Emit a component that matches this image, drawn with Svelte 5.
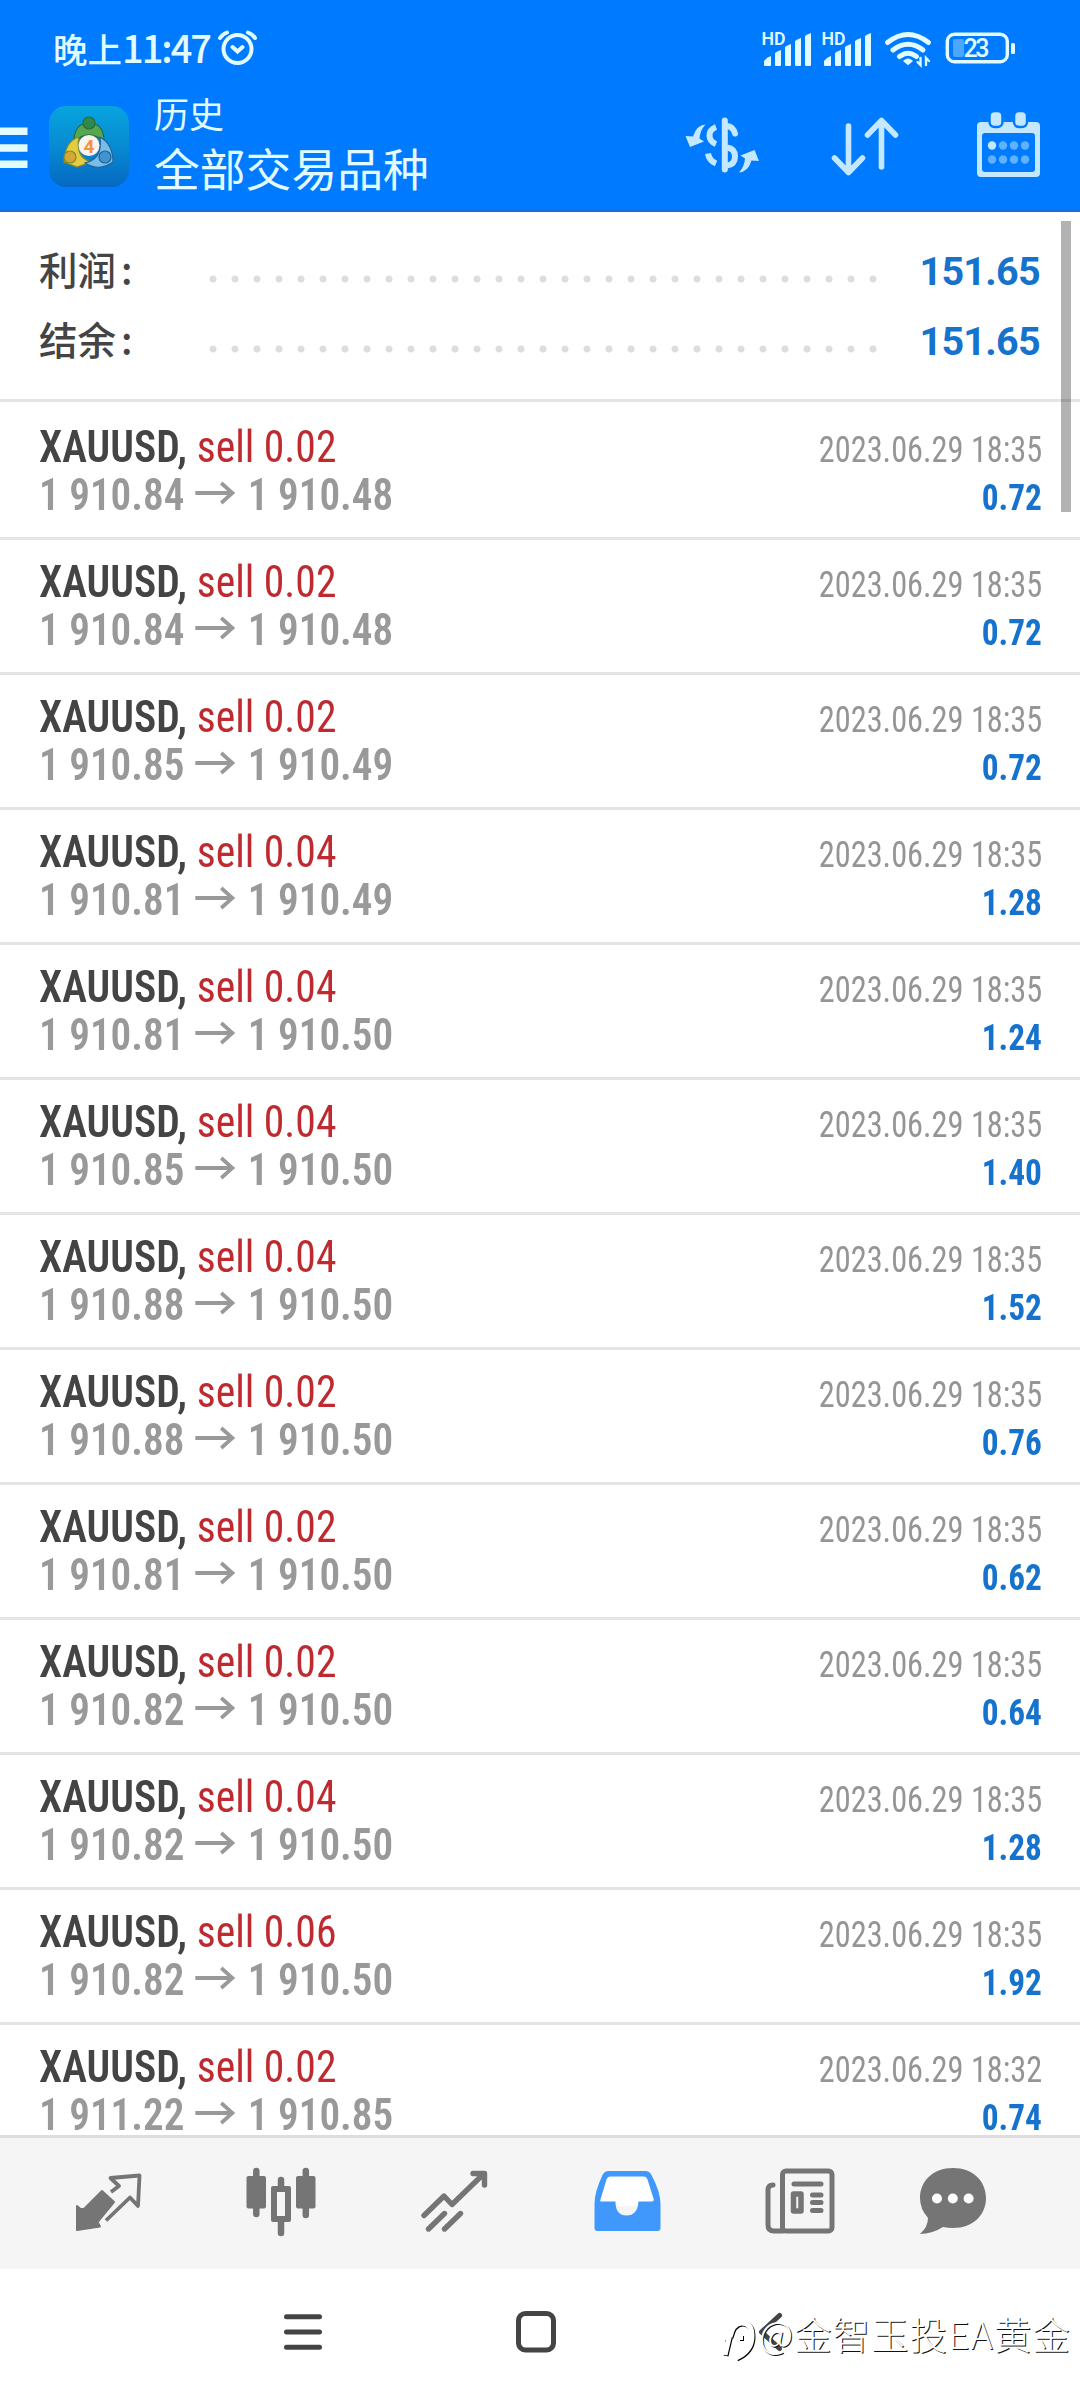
<script lang="ts">
	interface Deal {
		volume: string;
		open: string;
		close: string;
		time: string;
		profit: string;
	}

	const day = '2023.06.29';

	const deals: Deal[] = [
		{ volume: '0.02', open: '1 910.84', close: '1 910.48', time: '18:35', profit: '0.72' },
		{ volume: '0.02', open: '1 910.84', close: '1 910.48', time: '18:35', profit: '0.72' },
		{ volume: '0.02', open: '1 910.85', close: '1 910.49', time: '18:35', profit: '0.72' },
		{ volume: '0.04', open: '1 910.81', close: '1 910.49', time: '18:35', profit: '1.28' },
		{ volume: '0.04', open: '1 910.81', close: '1 910.50', time: '18:35', profit: '1.24' },
		{ volume: '0.04', open: '1 910.85', close: '1 910.50', time: '18:35', profit: '1.40' },
		{ volume: '0.04', open: '1 910.88', close: '1 910.50', time: '18:35', profit: '1.52' },
		{ volume: '0.02', open: '1 910.88', close: '1 910.50', time: '18:35', profit: '0.76' },
		{ volume: '0.02', open: '1 910.81', close: '1 910.50', time: '18:35', profit: '0.62' },
		{ volume: '0.02', open: '1 910.82', close: '1 910.50', time: '18:35', profit: '0.64' },
		{ volume: '0.04', open: '1 910.82', close: '1 910.50', time: '18:35', profit: '1.28' },
		{ volume: '0.06', open: '1 910.82', close: '1 910.50', time: '18:35', profit: '1.92' },
		{ volume: '0.02', open: '1 911.22', close: '1 910.85', time: '18:32', profit: '0.74' }
	];

	const totals = [
		{ label: '利润', value: '151.65' },
		{ label: '结余', value: '151.65' }
	];
</script>

{#snippet signal()}
	<svg class="signal" width="51" height="36" viewBox="0 0 51 36" fill="currentColor">
		<text x="-0.5" y="13.500" font-size="17.5" font-weight="600" textLength="24" lengthAdjust="spacingAndGlyphs">HD</text>
		<path d="M2 34v-4q3-4 7-5v9q0 1-1 1H3q-1 0-1-1z" />
		<path d="M13 34V22q3-2 6-3v15q0 1-1 1h-4q-1 0-1-1z" />
		<path d="M23 34V16q3-2 6-3v21q0 1-1 1h-4q-1 0-1-1z" />
		<path d="M33 34V10q3-2 6-3v27q0 1-1 1h-4q-1 0-1-1z" />
		<path d="M43 34V5q3-2 6-3v32q0 1-1 1h-4q-1 0-1-1z" />
	</svg>
{/snippet}

<div class="screen">
	<header>
		<div class="status">
			<span class="clock">晚上<b>11:47</b></span>
			<svg width="40" height="38" viewBox="218 31 40 38" fill="none" stroke="currentColor" stroke-width="4" stroke-linecap="round">
				<circle cx="237.500" cy="50" r="14" />
				<path d="M232.500 48l5 4.500 5-4.500M220 39q2-3.500 7-5.500M255 39q-2-3.500-7-5.500" />
			</svg>
			<div class="status-right">
				{@render signal()}
				{@render signal()}
				<svg class="wifi" width="48" height="38" viewBox="884 31 48 38" fill="none" stroke="currentColor" stroke-width="5" stroke-linecap="round">
					<path d="M887.500 43.500q20.500-16 41 0M893 51q15-11.500 30 0M899.500 57.500q8.500-6.500 17 0" />
					<path d="M904.500 62q3.500-3 7 0l-3.500 3z" fill="currentColor" stroke-width="2" />
					<path d="M920.500 59v7l-3-3M926 66v-7l3 3" stroke-width="2.400" />
				</svg>
				<svg width="70" height="34" viewBox="945 33 70 34">
					<rect x="947.300" y="35.300" width="60" height="27.400" rx="7" fill="none" stroke="currentColor" stroke-width="3.400" />
					<rect x="953" y="40" width="11" height="18" rx="2" fill="#4ca6ff" />
					<rect x="1011" y="44" width="4" height="11" rx="1.500" fill="currentColor" />
					<text x="963.500" y="58" font-size="25" font-weight="500" fill="currentColor" textLength="26">23</text>
				</svg>
			</div>
		</div>
		<div class="toolbar">
			<svg class="menu" width="48" height="41" viewBox="0 127 48 41" fill="currentColor">
				<path d="M0 127.500h27.500v7.500H0zM0 144.300h27.500v7.500H0zM0 160.500h27.500v7.500H0z" />
			</svg>
			<svg class="app-icon" width="82" height="84" viewBox="47 105 82 84">
				<defs>
					<linearGradient id="tile" x1="0" y1="0" x2="0" y2="1">
						<stop offset="0" stop-color="#08a4de" />
						<stop offset="0.500" stop-color="#078bd2" />
						<stop offset="1" stop-color="#0568c2" />
					</linearGradient>
				</defs>
				<rect x="48" y="106" width="80" height="81" rx="17" fill="url(#tile)" />
				<g stroke-width="1.200">
					<g fill="#55a850" stroke="#2c6b3a">
						<path d="M73 142q0-19 15-19t15 19q-15-14-30 0z" />
						<circle cx="88" cy="123" r="6" fill="#2f8a50" />
					</g>
					<g fill="#e5cb3f" stroke="#7d8c2e">
						<path d="M78 137q-14 4-15 25l13 5 14-5q-16-5-12-25z" />
						<circle cx="69" cy="157" r="6" fill="#d5a637" />
					</g>
					<g fill="#77bde8" stroke="#22639b">
						<path d="M99 137q13 7 13 25-14 10-28 1 18-4 15-26z" />
						<circle cx="104" cy="157" r="6" fill="#3f95cf" />
					</g>
				</g>
				<circle cx="88" cy="145.500" r="10.500" fill="#fbf3ec" />
				<text x="82.500" y="152.500" font-size="19" font-weight="700" fill="#ef9442">4</text>
			</svg>
			<div class="titles">
				<span class="section">历史</span>
				<span class="filter">全部交易品种</span>
			</div>
			<div class="actions">
				<svg width="74" height="60" viewBox="685 115 74 60" fill="none" stroke="currentColor" stroke-width="6">
					<path d="M724.800 119.500v49" stroke-linecap="round" />
					<path d="M727 125q6 .5 8 7.500" stroke-linecap="round" />
					<path d="M716 126q-6.500 2.500-6.500 8.500t6.500 8.500M708 152.500q1 7 8 10M727 146.500q8 1 8 9t-8 9" />
					<path d="M705.500 123.500q-9 .5-12.500 12l-7.500-.5 4.500 11 14-5.500-4.500-3q.5-8 6-14zM739 171.500q9-.5 12.500-12l7.500.5-4.500-11-14 5.500 4.500 3q-.5 8-6 14z" fill="currentColor" stroke="none" />
				</svg>
				<svg width="70" height="62" viewBox="830 114 70 62" fill="none" stroke="currentColor" stroke-width="5.600" stroke-linecap="round" stroke-linejoin="round">
					<path d="M848.500 125v46M834.500 157l14 14.500 14-14.500M881.500 166v-46M867.500 134l14-14.500 14 14.500" />
				</svg>
				<svg width="66" height="68" viewBox="976 112 66 68" fill="currentColor">
					<path fill-rule="evenodd" d="M981 122h55q4 0 4 4v47q0 4-4 4h-55q-4 0-4-4v-47q0-4 4-4zM985 133q-3 0-3 3v33q0 3 3 3h47q3 0 3-3v-33q0-3-3-3z" />
					<g stroke="#007aff" stroke-width="2.500">
						<rect x="989.500" y="111" width="13" height="16" rx="5" />
						<rect x="1014" y="111" width="13" height="16" rx="5" />
					</g>
					<circle cx="992" cy="145.500" r="4.200" />
					<g fill="#5fb2ff">
						<circle cx="1003" cy="145.500" r="4.200" />
						<circle cx="1014" cy="145.500" r="4.200" />
						<circle cx="1025" cy="145.500" r="4.200" />
						<circle cx="992" cy="159.500" r="4.200" />
						<circle cx="1003" cy="159.500" r="4.200" />
						<circle cx="1014" cy="159.500" r="4.200" />
						<circle cx="1025" cy="159.500" r="4.200" />
					</g>
				</svg>
			</div>
		</div>
	</header>

	<main>
		<section class="totals">
			{#each totals as total}
				<div class="total">
					<span class="label">{total.label}<i>:</i></span>
					<span class="dots"></span>
					<span class="value">{total.value}</span>
				</div>
			{/each}
		</section>
		<ul>
			{#each deals as deal}
				<li>
					<div class="line">
						<span class="symbol">XAUUSD, <em>sell {deal.volume}</em></span>
						<span class="time">{day} {deal.time}</span>
					</div>
					<div class="line">
						<span class="prices">
							{deal.open}
							<svg width="44" height="24" viewBox="0 0 44 24" fill="none" stroke="currentColor" stroke-width="4">
								<path d="M0 12h41M28 2l12 10-12 10" />
							</svg>
							{deal.close}
						</span>
						<span class="profit">{deal.profit}</span>
					</div>
				</li>
			{/each}
		</ul>
		<div class="scrollbar"></div>
	</main>

	<nav class="tabs">
		<svg width="70" height="74" viewBox="74 2164 70 74" fill="none" stroke="currentColor" stroke-width="3.800" stroke-linejoin="round">
			<path d="M102 2191l12 11-16.500 20 2.500 4.500-23 3.500v-24l3.500 3h3.500z" fill="currentColor" stroke-width="2" />
			<path d="M111 2192l8-6-8.500-8 29-2.500-1.500 30.500-8-8.500-24 23" />
		</svg>
		<svg width="74" height="74" viewBox="244 2164 74 74" fill="currentColor">
			<rect x="246.500" y="2176" width="19.500" height="32.500" rx="2" />
			<rect x="296" y="2176" width="19.500" height="32.500" rx="2" />
			<path fill-rule="evenodd" d="M273 2186h16q2 0 2 2v32q0 2-2 2h-16q-2 0-2-2v-32q0-2 2-2zM277 2192v24h8v-24z" />
			<path d="M256.300 2171v43M305.800 2171v44M281 2180v8M281 2221v12" fill="none" stroke="currentColor" stroke-width="6.500" stroke-linecap="round" />
		</svg>
		<svg width="74" height="74" viewBox="418 2164 74 74" fill="none" stroke="currentColor" stroke-width="5.400" stroke-linecap="round" stroke-linejoin="round">
			<path d="M424 2215.500l20-19.500 8 8.500 32-31M473 2173.500h11.500v11.500M428.500 2229l16-15.500M444.500 2229l16-15.500" />
		</svg>
		<svg class="active" width="70" height="74" viewBox="592.5 2164 70 74" fill="currentColor">
			<path fill="#fff" d="M607 2174h41l9 32h-59z" />
			<path fill-rule="evenodd" d="M609 2171h37q4 0 6 4 9 17 9 29v24q0 3-3 3h-60q-3 0-3-3v-24q0-12 8-29 2-4 6-4zM611 2176.500q-3 0-4 3l-6 20q-1 2 1 2h14q0 14 11 14t12-14h13q3 0 2-3l-6-19q-1-3-4-3z" />
		</svg>
		<svg width="74" height="74" viewBox="763 2164 74 74" fill="none" stroke="currentColor" stroke-width="5" stroke-linecap="round" stroke-linejoin="round">
			<rect x="783.500" y="2171" width="49.500" height="60" rx="3.500" />
			<path d="M774 2185q-5 0-5 5v35q0 6 6 6h9M795 2184h27M813.500 2195h8.500M813.500 2202.500h8.500M813.500 2210.500h8.500" />
			<rect x="794.500" y="2194" width="7.500" height="17" stroke-width="5.500" />
		</svg>
		<svg width="70" height="74" viewBox="918 2164 70 74" fill="currentColor">
			<path d="M953 2168c20 0 33 13 33 30s-13 30-33 30q-5 0-10-1-11 7-23 7 8-7 8-16-8-9-8-20c0-17 13-30 33-30z" />
			<g fill="#fff">
				<circle cx="937" cy="2198.500" r="5" />
				<circle cx="952.800" cy="2198.500" r="5" />
				<circle cx="968.600" cy="2198.500" r="5" />
			</g>
		</svg>
	</nav>

	<footer>
		<svg width="40" height="40" viewBox="283 2312 40 40" fill="none" stroke="currentColor" stroke-width="5" stroke-linecap="round">
			<path d="M286.500 2316.700h33M286.500 2332h33M286.500 2347.300h33" />
		</svg>
		<svg width="42" height="42" viewBox="515 2311 42 42" fill="none" stroke="currentColor" stroke-width="5">
			<rect x="518.500" y="2313.500" width="35" height="36.500" rx="7" />
		</svg>
		<svg width="30" height="42" viewBox="756 2311 30 42" fill="none" stroke="currentColor" stroke-width="5" stroke-linecap="round" stroke-linejoin="round">
			<path d="M779.500 2315.500l-18 16.500 18 16.500" />
		</svg>
		<div class="watermark">
			<svg width="34" height="50" viewBox="719 2309 34 50" fill="none" stroke="#fff" stroke-width="5">
				<path d="M723 2356l4-17h-5M728 2338q3-14 12-14 10 0 10 13 0 15-16 22M737 2338.500h4" />
			</svg>
			<span>@金智玉投EA黄金</span>
		</div>
	</footer>
</div>

<style>
	:global(body) {
		margin: 0;
		background: #fff;
	}

	.screen {
		width: 1080px;
		height: 2400px;
		display: flex;
		flex-direction: column;
		overflow: hidden;
		background: #fff;
		font-family: Roboto, 'Noto Sans CJK SC', sans-serif;
	}

	svg {
		display: block;
		flex-shrink: 0;
		overflow: visible;
	}

	header {
		box-sizing: border-box;
		height: 212px;
		background: #007aff;
		border-bottom: 2px solid #1d6fd6;
		color: #e2fbff;
	}

	.status {
		height: 97px;
		display: flex;
		align-items: center;
		padding-left: 53px;
		box-sizing: border-box;
	}
	.clock {
		width: 165px;
		margin-top: -2px;
		font: 500 34.5px/40px 'Noto Sans CJK SC', sans-serif;
		white-space: nowrap;
	}
	.clock b {
		font-weight: 500;
		font-size: 38px;
		letter-spacing: -2px;
	}
	.status-right {
		display: flex;
		align-items: center;
		margin-left: auto;
		padding-right: 65px;
	}
	.signal {
		margin-right: 9px;
	}
	.signal + .wifi {
		margin-left: 2px;
	}
	.wifi {
		margin-right: 13px;
	}

	.toolbar {
		display: flex;
		align-items: center;
		height: 97px;
	}
	.menu {
		margin-top: 4px;
	}
	.app-icon {
		margin-top: 2px;
	}
	.titles {
		display: flex;
		flex-direction: column;
		margin-left: 24px;
		font-family: 'Noto Sans CJK SC', sans-serif;
		white-space: nowrap;
	}
	.section {
		font-size: 35px;
		line-height: 42px;
	}
	.filter {
		font-size: 45.8px;
		line-height: 66px;
	}
	.actions {
		display: flex;
		align-items: center;
		margin-left: auto;
		padding-right: 38px;
		color: #c4e8ff;
	}
	.actions svg + svg {
		margin-left: 71px;
	}
	.actions svg:last-child {
		margin-left: 76px;
	}

	main {
		position: relative;
		height: 1923px;
	}

	.totals {
		box-sizing: border-box;
		height: 190px;
		padding: 24px 40px 0 39px;
		border-bottom: 3px solid #e4e4e4;
	}
	.total {
		height: 70px;
		display: flex;
		align-items: center;
	}
	.label {
		width: 163px;
		margin-top: -6px;
		font: 500 38.5px/70px 'Noto Sans CJK SC', sans-serif;
		color: #444;
	}
	.label i {
		font-style: normal;
		margin-left: 5px;
	}
	.dots {
		width: 682px;
		height: 22px;
		margin-top: 15px;
		background: radial-gradient(circle, #ddd 3px, transparent 4px) 0 0 / 22px 22px;
	}
	.value {
		margin-left: auto;
		font-size: 39.5px;
		font-weight: 700;
		letter-spacing: -0.7px;
		color: #1673cd;
	}

	ul {
		list-style: none;
		margin: 0;
		padding: 3px 0 0;
	}
	li {
		box-sizing: border-box;
		height: 135px;
		padding: 18px 38px 0 39px;
		border-bottom: 3px solid #e4e4e4;
		font-family: 'Roboto Condensed', Roboto, sans-serif;
		font-stretch: 75%;
	}
	li:last-child {
		border-bottom: none;
	}
	.line {
		height: 48px;
		display: flex;
		align-items: baseline;
		justify-content: space-between;
		line-height: 48px;
		white-space: nowrap;
	}
	.symbol,
	.prices {
		transform: scaleX(0.925);
		transform-origin: left;
	}
	.time,
	.profit {
		transform-origin: right;
	}
	.symbol {
		font-size: 45px;
		font-weight: 600;
		color: #444;
	}
	.symbol em {
		font-style: normal;
		font-weight: 400;
		color: #be2a2f;
	}
	.time {
		font-size: 37.5px;
		color: #959595;
		transform: scaleX(0.862);
	}
	.prices {
		font-size: 44.5px;
		font-weight: 650;
		color: #999;
	}
	.prices svg {
		display: inline-block;
		vertical-align: 5px;
		margin: 0 2px;
	}
	.profit {
		font-size: 37px;
		font-weight: 700;
		color: #1673cd;
		transform: scaleX(0.9);
	}

	.scrollbar {
		position: absolute;
		top: 9px;
		right: 9px;
		width: 10px;
		height: 291px;
		background: rgba(0, 0, 0, 0.3);
	}

	.tabs {
		box-sizing: border-box;
		height: 134px;
		display: flex;
		gap: 100px;
		padding: 26px 0 0 74px;
		border-top: 3px solid #ddd;
		background: #f5f5f5;
		color: #757575;
	}
	.tabs svg:last-child {
		margin-left: -18px;
	}
	.active {
		color: #4098fc;
	}

	footer {
		position: relative;
		display: flex;
		align-items: center;
		height: 126px;
		padding-left: 283px;
		color: #444;
	}
	footer > svg + svg {
		margin-left: 192px;
	}
	footer > svg:nth-of-type(3) {
		margin-left: 199px;
	}
	.watermark {
		position: absolute;
		left: 721px;
		top: 39px;
		display: flex;
		color: #fff;
		font: 300 37.5px/50px 'Noto Sans CJK SC', sans-serif;
		letter-spacing: 1px;
		text-shadow: 1px 1px 0 #111;
		white-space: nowrap;
	}
	.watermark svg {
		filter: drop-shadow(1.5px 1px 0 #000);
	}
	.watermark span {
		margin-left: 4px;
	}
</style>
